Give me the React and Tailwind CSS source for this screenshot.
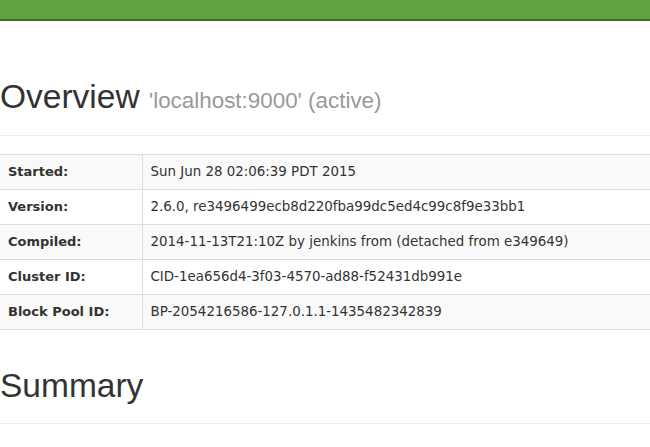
export default function App() {
  const rows = [
    ["Started:", "Sun Jun 28 02:06:39 PDT 2015"],
    ["Version:", "2.6.0, re3496499ecb8d220fba99dc5ed4c99c8f9e33bb1"],
    ["Compiled:", "2014-11-13T21:10Z by jenkins from (detached from e349649)"],
    ["Cluster ID:", "CID-1ea656d4-3f03-4570-ad88-f52431db991e"],
    ["Block Pool ID:", "BP-2054216586-127.0.1.1-1435482342839"],
  ];
  return (
    <div className="w-[650px] h-[447px] overflow-hidden bg-white">
      <div className="h-[21px] bg-[#5ea33d] border-b-[2px] border-[#3e6e2a]" />
      <div className="pt-[56px] pb-[14px] border-b border-[#eeeeee] font-['Liberation_Sans',sans-serif]">
        <h1 className="text-[33.5px] leading-[40px] text-[#333333]">
          Overview <span className="text-[22.4px] text-[#999999]">'localhost:9000' (active)</span>
        </h1>
      </div>
      <table className="mt-[18px] w-full border-collapse font-['DejaVu_Sans',sans-serif] text-[13.4px] text-[#333333]">
        <tbody>
          {rows.map(([k, v], i) => (
            <tr key={k} className={i % 2 === 0 ? "bg-[#f9f9f9]" : "bg-white"}>
              <th className="w-[142px] h-[35px] border-t border-[#dddddd] border-r text-left font-bold pl-[8px] text-[13px]">{k}</th>
              <td className="h-[35px] border-t border-[#dddddd] pl-[8px]">{v}</td>
            </tr>
          ))}
          <tr><td colSpan={2} className="border-t border-[#dddddd] h-0 p-0" /></tr>
        </tbody>
      </table>
      <div className="pt-[36px] pb-[17px] border-b border-[#eeeeee] font-['Liberation_Sans',sans-serif]">
        <h1 className="text-[33.5px] leading-[40px] text-[#333333]">Summary</h1>
      </div>
    </div>
  );
}
